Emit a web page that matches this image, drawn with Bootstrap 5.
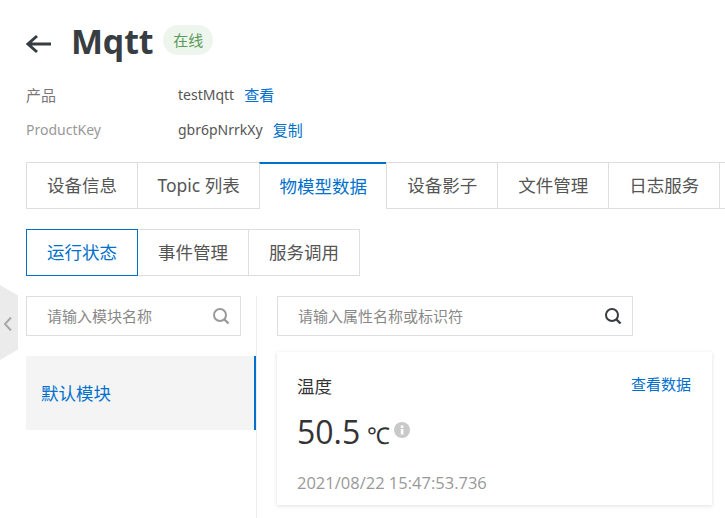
<!DOCTYPE html>
<html lang="zh"><head><meta charset="utf-8">
<link href="https://cdn.jsdelivr.net/npm/bootstrap@5.3.0/dist/css/bootstrap.min.css" rel="stylesheet">
<style>
html,body{height:518px;overflow:hidden;background:#fff}
body{font-family:"Noto Sans","Noto Sans CJK SC",sans-serif;color:#333;width:725px}
.page{padding:25px 0 0 26px;position:relative;height:518px;overflow:hidden}
.head-row{height:30px;margin-bottom:30px}
.back-ic{width:26px;height:20px;display:block;margin:7px 19px 0 0}
.ttl{font-size:34px;font-weight:700;color:#373d41;line-height:30px;margin:2px 0 0;font-family:"Open Sans","Noto Sans CJK SC",sans-serif;letter-spacing:-.2px}
.pill{background:#edf5ed;color:#5b9a5b;font-size:15px;height:30px;line-height:30px;padding:0 10px;border-radius:15px;margin-left:10px}
.meta{font-size:14px;height:20px;line-height:20px;margin-bottom:15px;color:#555}
.meta .mk{width:152px;color:#777}
.meta .cjk{font-size:15px}
.meta .mk.lt{color:#999}
.meta a{color:#0070cc;text-decoration:none;margin-left:10px;font-size:15px}
.tabs-a,.tabs-b{display:flex;width:max-content}
.tabs-a{margin-top:22px}
.tabc{height:47px;line-height:45px;padding:0 20px;font-size:17.5px;color:#555;border:1px solid #dedede;margin-left:-1px;background:#fff;position:relative;white-space:nowrap}
.tabc:first-child{margin-left:0}
.tabc.tight{padding:0 19.5px}
.tabc.on{color:#0070cc;border-top:2px solid #0070cc;border-bottom:0;line-height:44px;height:46px;padding:0 19.25px}
.tabc.stub{width:20px;padding:0;border-right:0}
.tabs-b{margin-top:20px}
.tabc.sel{border-color:#0070cc;color:#0070cc;z-index:1}
.split{margin-top:20px}
.leftp{width:231px;border-right:1px solid #ececec;height:240px}
.srch{height:40px;border:1px solid #dedede;padding:0 10px 0 20px;font-size:15px;color:#888;background:#fff}
.srch svg{width:18px;height:18px;display:block}
.srch.s1{width:215px}
.srch.s2{width:356px}
.modp{margin-top:20px;height:74px;width:230px;background:#f4f4f4;border-right:2px solid #0070cc;color:#0070cc;font-size:17.5px;padding-left:15px}
.rightp{padding-left:20px}
.pcard{margin-top:16px;width:435px;height:153px;background:#fff;box-shadow:0 1px 4px rgba(0,0,0,.13);padding:23px 21px 0 20px}
.pname{font-size:17.5px;color:#333;line-height:22px}
.pcard a{color:#0070cc;text-decoration:none;font-size:15px;line-height:18px}
.pval{font-size:32px;line-height:44px;margin-top:13px;color:#333;font-family:"Open Sans",sans-serif}
.unit{font-size:23px;margin-left:7px}
.info{width:16px;height:16px;margin-left:4px;vertical-align:6px}
.tm{font-size:16.5px;color:#999;line-height:22px;margin-top:15px;font-family:"Open Sans",sans-serif}
.flap{position:absolute;left:0;top:285px;width:18px;height:75px;background:#ebebeb;clip-path:polygon(0 0,100% 14%,100% 86%,0 100%)}
.flap svg{position:absolute;left:3px;top:31px;width:10px;height:16px}
</style></head><body>
<div class="page">
<div class="flap"><svg viewBox="0 0 10 16"><path d="M8 1.5 2 8l6 6.5" fill="none" stroke="#a8a8a8" stroke-width="2"/></svg></div>
<div class="d-flex align-items-center head-row">
<svg class="back-ic" viewBox="0 0 26 20"><path d="M25 10H2M11 2 2 10l9 8" fill="none" stroke="#373d41" stroke-width="3"/></svg>
<h1 class="ttl">Mqtt</h1><span class="pill">在线</span></div>
<div class="d-flex meta"><span class="mk cjk">产品</span><span>testMqtt</span><a href="#">查看</a></div>
<div class="d-flex meta"><span class="mk lt">ProductKey</span><span>gbr6pNrrkXy</span><a href="#">复制</a></div>
<div class="tabs-a">
<div class="tabc">设备信息</div><div class="tabc tight">Topic 列表</div><div class="tabc on">物模型数据</div><div class="tabc">设备影子</div><div class="tabc">文件管理</div><div class="tabc">日志服务</div><div class="tabc stub"></div>
</div>
<div class="tabs-b"><div class="tabc sel">运行状态</div><div class="tabc">事件管理</div><div class="tabc">服务调用</div></div>
<div class="d-flex split">
<div class="leftp">
<div class="srch s1 d-flex align-items-center justify-content-between"><span>请输入模块名称</span><svg viewBox="0 0 18 18"><circle cx="8" cy="8" r="6" fill="none" stroke="#999" stroke-width="2"/><path d="m12.5 12.5 4 4" stroke="#999" stroke-width="2.4"/></svg></div>
<div class="modp d-flex align-items-center">默认模块</div>
</div>
<div class="rightp">
<div class="srch s2 d-flex align-items-center justify-content-between"><span>请输入属性名称或标识符</span><svg viewBox="0 0 18 18"><circle cx="8" cy="8" r="6" fill="none" stroke="#373d41" stroke-width="2"/><path d="m12.5 12.5 4 4" stroke="#373d41" stroke-width="2.4"/></svg></div>
<div class="pcard">
<div class="d-flex justify-content-between align-items-start"><span class="pname">温度</span><a href="#">查看数据</a></div>
<div class="pval">50.5<span class="unit">℃</span><svg class="info" viewBox="0 0 16 16"><circle cx="8" cy="8" r="8" fill="#c9c9c9"/><rect x="6.8" y="7" width="2.6" height="5.5" fill="#fff"/><rect x="6.8" y="3.5" width="2.6" height="2.3" fill="#fff"/></svg></div>
<div class="tm">2021/08/22 15:47:53.736</div>
</div>
</div>
</div>
</div>
</body></html>
